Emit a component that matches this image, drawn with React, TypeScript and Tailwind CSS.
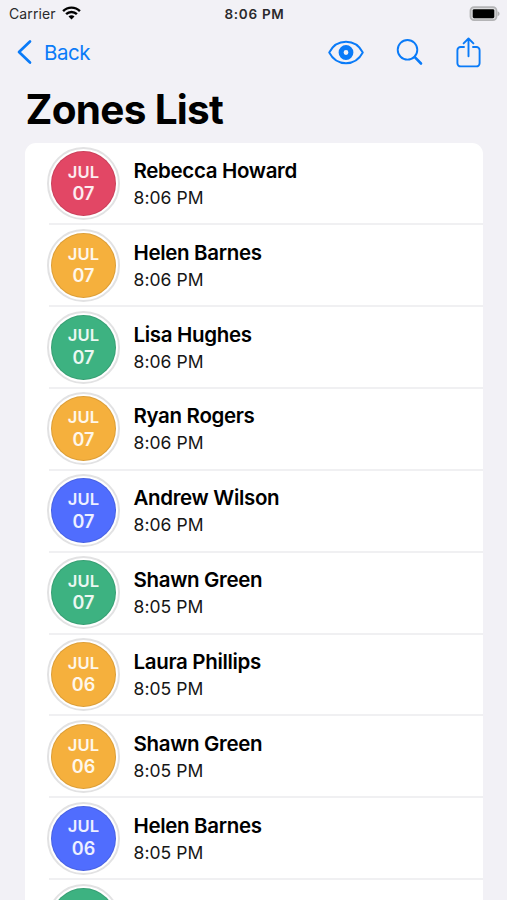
type Zone = {
  name: string;
  time: string;
  day: string;
  color: string;
};

const RED = "bg-[#e24765]";
const ORANGE = "bg-[#f5b03d]";
const GREEN = "bg-[#3db281]";
const BLUE = "bg-[#506dfe]";

const zones: Zone[] = [
  { name: "Rebecca Howard", time: "8:06 PM", day: "07", color: RED },
  { name: "Helen Barnes", time: "8:06 PM", day: "07", color: ORANGE },
  { name: "Lisa Hughes", time: "8:06 PM", day: "07", color: GREEN },
  { name: "Ryan Rogers", time: "8:06 PM", day: "07", color: ORANGE },
  { name: "Andrew Wilson", time: "8:06 PM", day: "07", color: BLUE },
  { name: "Shawn Green", time: "8:05 PM", day: "07", color: GREEN },
  { name: "Laura Phillips", time: "8:05 PM", day: "06", color: ORANGE },
  { name: "Shawn Green", time: "8:05 PM", day: "06", color: ORANGE },
  { name: "Helen Barnes", time: "8:05 PM", day: "06", color: BLUE },
  { name: "Rebecca Howard", time: "8:05 PM", day: "06", color: GREEN },
];

function StatusBar() {
  return (
    <div className="grid h-[27px] grid-cols-3 items-center pr-[7px] pl-[9px] text-[14px] text-[#2a2a2c]">
      <div className="flex items-center gap-[6px]">
        <span className="tracking-[0.1px]">Carrier</span>
        <svg className="mb-[2px]" width="19" height="14" viewBox="0 0 19 14" fill="none" stroke="#000" strokeWidth="2.4">
          <path d="M1.1 5.1a11.8 11.8 0 0 1 16.8 0" />
          <path d="M4.1 8.2a7.6 7.6 0 0 1 10.8 0" />
          <path d="M9.5 13.6 6.5 10.5a4.2 4.2 0 0 1 6 0Z" fill="#000" stroke="none" />
        </svg>
      </div>
      <span className="pt-px text-center text-[13.5px] font-semibold tracking-[0.7px]">8:06 PM</span>
      <svg className="justify-self-end" width="31" height="16" viewBox="0 0 31 16">
        <rect x="1.5" y="1.2" width="26" height="13" rx="3.6" fill="#dcdcde" stroke="#b4b4b6" strokeWidth="1.8" />
        <rect x="3.7" y="3.2" width="21.6" height="9" rx="1.4" fill="#000" />
        <path d="M28.6 5.2c2.6 1 2.6 4 0 5Z" fill="#b0b0b2" />
      </svg>
    </div>
  );
}

function NavBar() {
  return (
    <div className="flex h-[50px] items-center justify-between pr-[26px] pl-[16px] text-[#0a7bf8]">
      <button className="flex items-center gap-[11px] text-[20.5px] tracking-[-0.5px]">
        <svg width="17" height="26" viewBox="0 0 17 26" fill="none" stroke="currentColor" strokeWidth="2.7" strokeLinecap="round" strokeLinejoin="round">
          <path d="M14 2.5 3 13l11 10.5" />
        </svg>
        <span className="pt-[2px]">Back</span>
      </button>

      <div className="flex items-center">
        <svg width="36" height="25" viewBox="0 0 36 25" fill="none" stroke="currentColor">
          <path
            d="M1.2 12.5C4.5 6.2 10.8 1.8 18 1.8S31.5 6.2 34.8 12.5C31.5 18.8 25.2 23.2 18 23.2S4.5 18.8 1.2 12.5Z"
            strokeWidth="1.9"
            strokeLinejoin="round"
          />
          <circle cx="18" cy="12.5" r="4.9" strokeWidth="5" />
        </svg>
        <svg className="ml-[32px]" width="28" height="28" viewBox="0 0 28 28" fill="none" stroke="currentColor" strokeLinecap="round">
          <circle cx="11.5" cy="11.8" r="9.8" strokeWidth="1.9" />
          <path d="m18.8 19.2 6.2 6.3" strokeWidth="2.6" />
        </svg>
        <svg className="ml-[32px]" width="25" height="31" viewBox="0 0 25 31" fill="none" stroke="currentColor" strokeWidth="1.9" strokeLinecap="round">
          <path d="M8 10H4.6A3.2 3.2 0 0 0 1.4 13.2V26.2a3.2 3.2 0 0 0 3.2 3.2H20.4a3.2 3.2 0 0 0 3.2-3.2V13.2A3.2 3.2 0 0 0 20.4 10H17" />
          <path d="M12.5 19.3V1.7M7.6 6.4l4.9-4.9 4.9 4.9" strokeLinejoin="round" />
        </svg>
      </div>
    </div>
  );
}

function DateBadge({ day, color }: { day: string; color: string }) {
  return (
    <div className="flex size-[73px] shrink-0 items-center justify-center rounded-full border-2 border-[#e2e2e3] bg-white">
      <div
        className={`flex size-[65px] flex-col items-center justify-center rounded-full border border-black/10 text-white/90 ${color}`}
      >
        <span className="text-[16.5px] leading-[21.5px] font-semibold tracking-[0.2px]">JUL</span>
        <span className="text-[18px] leading-[22px] font-semibold">{day}</span>
      </div>
    </div>
  );
}

function ZoneRow({ zone }: { zone: Zone }) {
  return (
    <li className="flex h-[81.85px] flex-col pl-[22px]">
      <div className="flex flex-1 items-center gap-[13.5px]">
        <DateBadge day={zone.day} color={zone.color} />
        <div className="flex flex-col pt-[2px]">
          <span className="text-[20.5px] leading-[26px] font-semibold tracking-[-0.33px] text-black">
            {zone.name}
          </span>
          <span className="text-[17.5px] leading-[27px] tracking-[0.05px] text-[#161616]">{zone.time}</span>
        </div>
      </div>
      <div className="ml-[2px] h-[2px] bg-[#f0f0f2]" />
    </li>
  );
}

export default function App() {
  return (
    <div className="h-[900px] w-[507px] overflow-hidden bg-[#f2f1f6] font-['Inter',sans-serif]">
      <StatusBar />
      <NavBar />
      <h1 className="flex h-[65.5px] items-center pt-px pl-[25.5px] text-[40.5px] font-bold tracking-[-0.7px] text-black">
        Zones List
      </h1>
      <ul className="mr-[24px] ml-[25px] rounded-t-[11px] bg-white pt-[1px]">
        {zones.map((zone, index) => (
          <ZoneRow key={index} zone={zone} />
        ))}
      </ul>
    </div>
  );
}
